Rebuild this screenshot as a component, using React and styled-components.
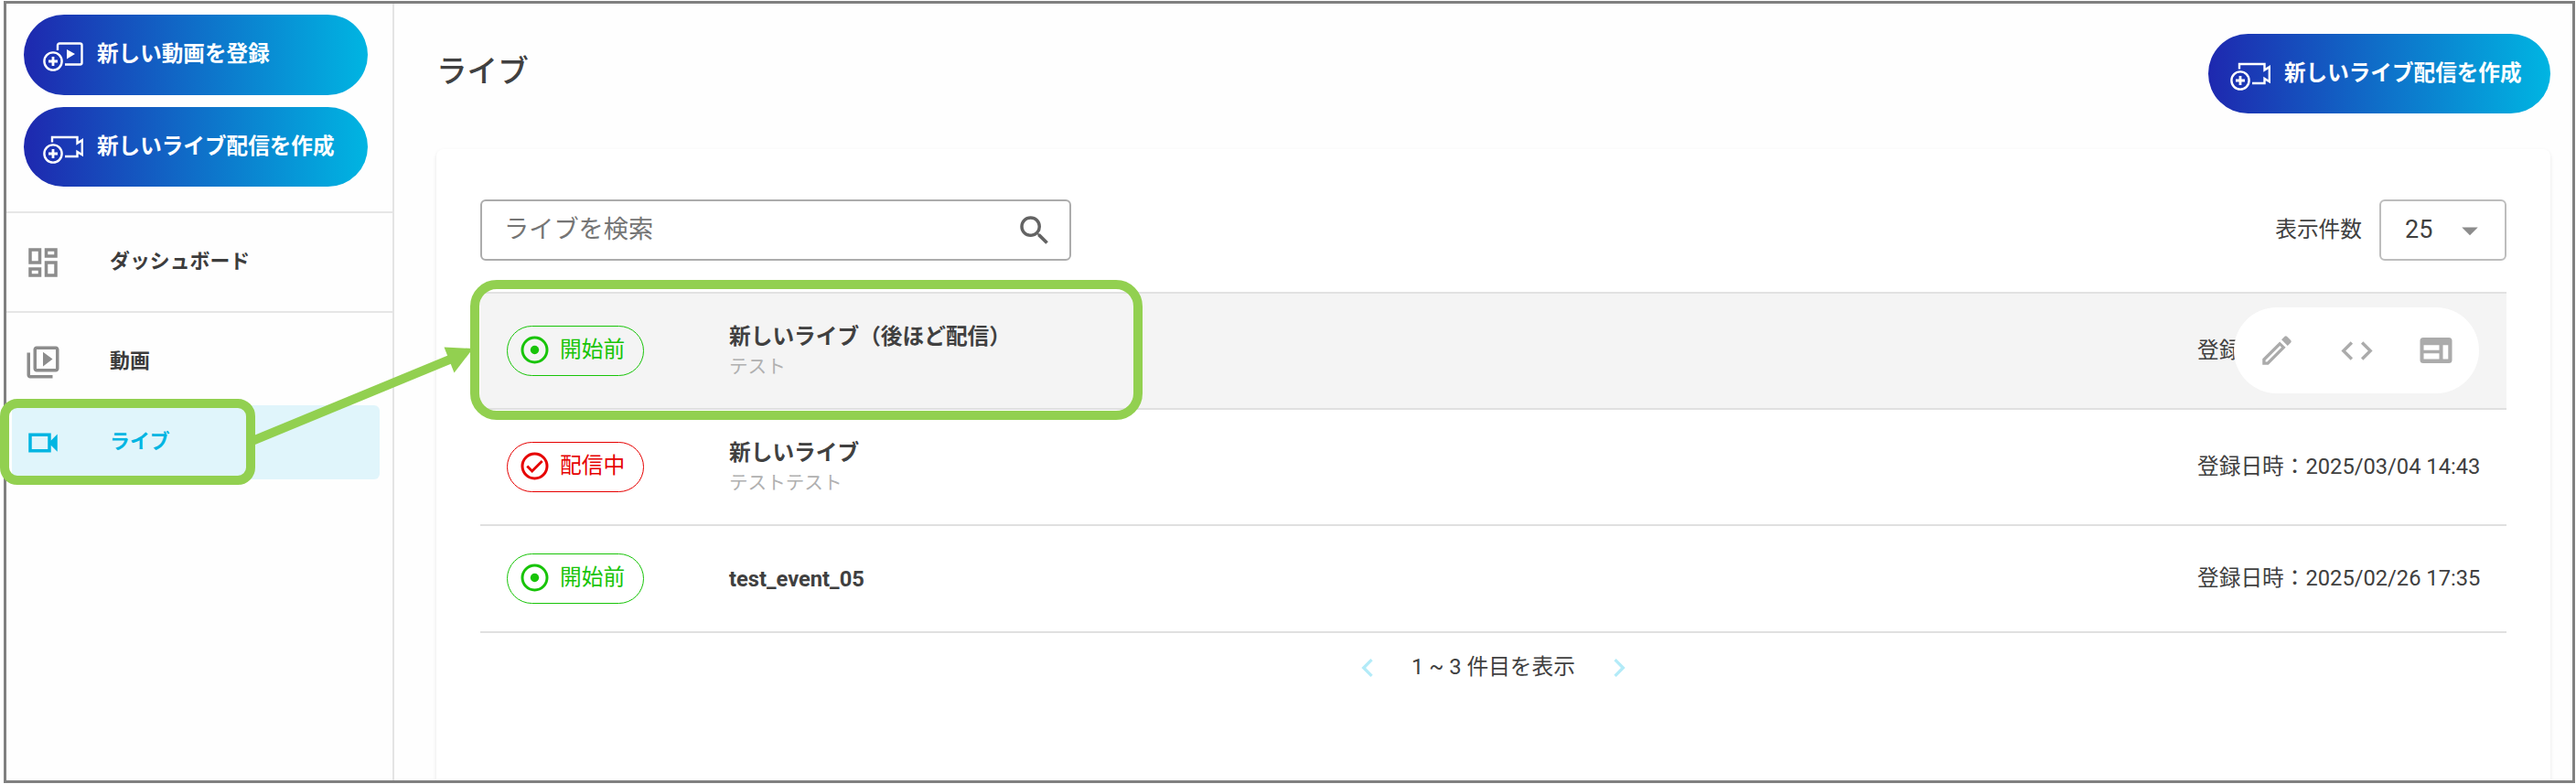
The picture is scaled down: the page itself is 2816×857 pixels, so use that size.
import React from 'react';
import styled, { createGlobalStyle } from 'styled-components';
import {
  MdArrowDropDown,
  MdChevronLeft,
  MdChevronRight,
  MdCode,
  MdOutlineDashboard,
  MdOutlineVideoLibrary,
  MdSearch,
} from 'react-icons/md';

const GlobalStyle = createGlobalStyle`
  * {
    box-sizing: border-box;
  }
  body {
    margin: 0;
    background: #fff;
    color: #404040;
    font-family: Roboto, 'Noto Sans CJK JP', sans-serif;
    font-size: 23.7px;
    line-height: 1.2;
  }
`;

const Page = styled.div`
  position: relative;
  width: 2816px;
  height: 857px;
  padding: 1px 1px 1px 4px;
  overflow: hidden;
`;

const Frame = styled.div`
  display: flex;
  height: 855px;
  border: 3px solid #808080;
  background: #fefefe;
  overflow: hidden;
`;

const Sidebar = styled.aside`
  flex: none;
  width: 424px;
  border-right: 2px solid #e4e4e4;
`;

const SidebarActions = styled.div`
  display: flex;
  flex-direction: column;
  gap: 13px;
  height: 229px;
  padding: 12px 0 0 19px;
  border-bottom: 2px solid #e6e6e6;
`;

const GradientButton = styled.button`
  display: flex;
  align-items: center;
  width: ${(props) => props.$width || 376}px;
  height: ${(props) => props.$height || 87}px;
  padding: 0 0 0 ${(props) => props.$inset || 21}px;
  border: 0;
  border-radius: 44px;
  background: linear-gradient(90deg, #1e28af 0%, #00b5e2 100%);
  color: #fff;
  font-family: inherit;
  font-size: 23.6px;
  font-weight: 700;
  white-space: nowrap;
  svg {
    flex: none;
    margin: 5px 14px 0 0;
  }
  span {
    padding-bottom: 6px;
  }
`;

const Nav = styled.nav`
  display: flex;
  flex-direction: column;
`;

const NavItem = styled.a`
  display: flex;
  align-items: center;
  height: ${(props) => props.$height}px;
  margin: ${(props) => (props.$active ? '0 14px 0 6px' : '0')};
  padding: ${(props) => props.$offset || 0}px 0 0 ${(props) => (props.$active ? 13 : 19)}px;
  border-bottom: ${(props) => (props.$divider ? '2px solid #e6e6e6' : '0')};
  border-radius: ${(props) => (props.$active ? '6px' : '0')};
  background: ${(props) => (props.$active ? '#e0f5fb' : 'transparent')};
  color: ${(props) => (props.$active ? '#00b5e2' : '#3c3c3c')};
  font-size: 21.9px;
  font-weight: 700;
  svg {
    flex: none;
    margin-right: 52px;
    color: ${(props) => (props.$active ? '#00b5e2' : '#8c8c8c')};
  }
`;

const Main = styled.main`
  display: flex;
  flex: 1;
  flex-direction: column;
  padding: 33px 24px 0 46px;
`;

const Header = styled.header`
  display: flex;
  flex: none;
  justify-content: space-between;
  height: 126px;
`;

const Title = styled.h1`
  margin: 22px 0 0;
  font-size: 33.6px;
  font-weight: 500;
`;

const Card = styled.section`
  flex: 1;
  padding: 55px 48px 0;
  border-radius: 8px 8px 0 0;
  background: #fff;
  box-shadow: 0 2px 4px rgba(0, 0, 0, 0.1);
`;

const Toolbar = styled.div`
  display: flex;
  align-items: center;
  justify-content: space-between;
  height: 67px;
  margin-bottom: 34px;
`;

const SearchBox = styled.div`
  display: flex;
  align-items: center;
  justify-content: space-between;
  width: 646px;
  height: 67px;
  padding: 0 17px 0 24px;
  border: 2px solid #acacac;
  border-radius: 6px;
  color: #757575;
  font-size: 27.2px;
  svg {
    color: #636363;
  }
`;

const PageSize = styled.div`
  display: flex;
  align-items: center;
  gap: 19px;
`;

const Select = styled.div`
  display: flex;
  align-items: center;
  justify-content: space-between;
  width: 139px;
  height: 67px;
  padding: 0 17px 0 26px;
  border: 2px solid #bdbdbd;
  border-radius: 6px;
  font-size: 27px;
  svg {
    color: #8c8c8c;
  }
`;

const Table = styled.div`
  border-top: 2px solid #e2e2e2;
`;

const Row = styled.div`
  position: relative;
  display: flex;
  align-items: center;
  height: ${(props) => props.$height}px;
  padding: 0 30px 0 29px;
  border-bottom: 2px solid #e0e0e0;
  background: ${(props) => (props.$hovered ? '#f4f4f4' : 'transparent')};
`;

const Badge = styled.div`
  display: flex;
  align-items: center;
  width: 150px;
  height: 55px;
  margin-right: 93px;
  padding-left: 14px;
  border: 1.5px solid currentColor;
  border-radius: 28px;
  color: ${(props) => props.$color};
  svg {
    flex: none;
    margin: -3px 12px 0 0;
  }
  span {
    padding-bottom: 2px;
  }
`;

const RowBody = styled.div`
  flex: 1;
`;

const RowTitle = styled.div`
  height: 33px;
  font-weight: 700;
  line-height: 34px;
`;

const RowNote = styled.div`
  height: 33px;
  color: #b0b0b0;
  font-size: 20.6px;
  line-height: 35px;
`;

const DateCell = styled.div`
  width: 308px;
  white-space: nowrap;
`;

const RowActions = styled.div`
  position: absolute;
  top: 15px;
  right: 30px;
  display: flex;
  align-items: center;
  justify-content: space-between;
  width: 268px;
  height: 94px;
  padding: 0 26px;
  border-radius: 47px;
  background: #fff;
  color: #ababab;
`;

const Pagination = styled.div`
  display: flex;
  align-items: center;
  justify-content: center;
  gap: 28px;
  height: 75px;
  svg {
    color: #b3ebf8;
  }
`;

// Guide frames drawn on top of the screen
const Callout = styled.div`
  position: absolute;
  top: ${(props) => props.$top}px;
  left: ${(props) => props.$left}px;
  width: ${(props) => props.$width}px;
  height: ${(props) => props.$height}px;
  border: 10px solid #92d050;
  border-radius: ${(props) => props.$radius}px;
`;

const CalloutArrow = styled.svg`
  position: absolute;
  top: 370px;
  left: 270px;
`;

const AddVideoIcon = () => (
  <svg width="45" height="33" viewBox="0 0 45 33" fill="none" stroke="#fff" strokeWidth="2.4">
    <circle cx="11" cy="21" r="9.6" />
    <path d="M11 16v10M6 21h10" strokeWidth="2.8" />
    <path d="M16 9V3.5a2 2 0 0 1 2-2h22.5a2 2 0 0 1 2 2v19a2 2 0 0 1-2 2H24" />
    <path d="M26 8l9 5-9 5.5z" fill="#fff" stroke="none" />
  </svg>
);

const AddLiveIcon = () => (
  <svg width="45" height="33" viewBox="0 0 45 33" fill="none" stroke="#fff" strokeWidth="2.4">
    <circle cx="11" cy="21" r="9.6" />
    <path d="M11 16v10M6 21h10" strokeWidth="2.8" />
    <path d="M10 8.5V3h27.5v6.5l5.3-3.3v16l-5.3-3.2v5H24" />
  </svg>
);

const LiveIcon = () => (
  <svg width="42" height="42" viewBox="0 0 24 24" fill="currentColor">
    <path d="M3 6v12h14v-4.5l4 4v-11l-4 4V6zm2 2h10v8H5z" fillRule="evenodd" />
  </svg>
);

const PencilIcon = () => (
  <svg width="42" height="42" viewBox="0 0 24 24" fill="currentColor">
    <path d="M3 17.300V21h3.700L17.500 10.200l-3.700-3.700zM4.900 19.200v-1l9-9 1 1-9 9z" fillRule="evenodd" />
    <path d="M14.900 5.300l3.800 3.800 2-2a1 1 0 0 0 0-1.400l-2.400-2.400a1 1 0 0 0-1.400 0z" />
  </svg>
);

const PlayerPageIcon = () => (
  <svg width="42" height="42" viewBox="0 0 24 24" fill="currentColor">
    <path
      d="M4 4h16a2 2 0 0 1 2 2v12a2 2 0 0 1-2 2H4a2 2 0 0 1-2-2V6a2 2 0 0 1 2-2zM4.300 8.700v3.200h9.700V8.700zM4.300 13.900v3.500h9.700v-3.500zM16.300 8.700v8.700h3.300V8.700z"
      fillRule="evenodd"
    />
  </svg>
);

const WaitingIcon = () => (
  <svg width="31" height="31" viewBox="0 0 31 31">
    <circle cx="15.5" cy="15.5" r="13.5" fill="none" stroke="currentColor" strokeWidth="3" />
    <circle cx="15.5" cy="15.5" r="4.7" fill="currentColor" />
  </svg>
);

const OnAirIcon = () => (
  <svg width="31" height="31" viewBox="0 0 31 31" fill="none" stroke="currentColor">
    <circle cx="15.5" cy="15.5" r="13.5" strokeWidth="3" />
    <path d="M7.300 15.500l5.400 5.400L23.700 10" strokeWidth="2.8" />
  </svg>
);

const statuses = {
  waiting: { label: '開始前', color: '#18c408', Icon: WaitingIcon },
  onAir: { label: '配信中', color: '#e60000', Icon: OnAirIcon },
};

const lives = [
  { title: '新しいライブ（後ほど配信）', note: 'テスト', status: 'waiting', date: '登録', height: 127, hovered: true },
  { title: '新しいライブ', note: 'テストテスト', status: 'onAir', date: '登録日時：2025/03/04 14:43', height: 127 },
  { title: 'test_event_05', status: 'waiting', date: '登録日時：2025/02/26 17:35', height: 117 },
];

const StatusBadge = ({ status }) => {
  const { label, color, Icon } = statuses[status];
  return (
    <Badge $color={color}>
      <Icon />
      <span>{label}</span>
    </Badge>
  );
};

const LiveRow = ({ live }) => (
  <Row $height={live.height} $hovered={live.hovered}>
    <StatusBadge status={live.status} />
    <RowBody>
      <RowTitle>{live.title}</RowTitle>
      {live.note && <RowNote>{live.note}</RowNote>}
    </RowBody>
    <DateCell>{live.date}</DateCell>
    {live.hovered && (
      <RowActions>
        <PencilIcon />
        <MdCode size={41} />
        <PlayerPageIcon />
      </RowActions>
    )}
  </Row>
);

const App = () => (
  <Page>
    <GlobalStyle />
    <Frame>
      <Sidebar>
        <SidebarActions>
          <GradientButton $height={88}>
            <AddVideoIcon />
            <span>新しい動画を登録</span>
          </GradientButton>
          <GradientButton>
            <AddLiveIcon />
            <span>新しいライブ配信を作成</span>
          </GradientButton>
        </SidebarActions>
        <Nav>
          <NavItem $height={109} $divider>
            <MdOutlineDashboard size={42} />
            ダッシュボード
          </NavItem>
          <NavItem $height={101} $offset={6}>
            <MdOutlineVideoLibrary size={42} />
            動画
          </NavItem>
          <NavItem $height={81} $active>
            <LiveIcon />
            ライブ
          </NavItem>
        </Nav>
      </Sidebar>
      <Main>
        <Header>
          <Title>ライブ</Title>
          <GradientButton $width={374} $inset={24}>
            <AddLiveIcon />
            <span>新しいライブ配信を作成</span>
          </GradientButton>
        </Header>
        <Card>
          <Toolbar>
            <SearchBox>
              ライブを検索
              <MdSearch size={42} />
            </SearchBox>
            <PageSize>
              表示件数
              <Select>
                25
                <MdArrowDropDown size={42} />
              </Select>
            </PageSize>
          </Toolbar>
          <Table>
            {lives.map((live) => (
              <LiveRow key={live.title} live={live} />
            ))}
          </Table>
          <Pagination>
            <MdChevronLeft size={40} />
            <span>1 ~ 3 件目を表示</span>
            <MdChevronRight size={40} />
          </Pagination>
        </Card>
      </Main>
    </Frame>
    <Callout $top={436} $left={0} $width={279} $height={94} $radius={19} />
    <Callout $top={306} $left={514} $width={735} $height={153} $radius={29} />
    <CalloutArrow width="250" height="130" viewBox="270 370 250 130">
      <path d="M277 481.500L494 392" stroke="#92d050" strokeWidth="10" />
      <path d="M485.500 379.500L517 381L496.500 407.500z" fill="#92d050" />
    </CalloutArrow>
  </Page>
);

export default App;
